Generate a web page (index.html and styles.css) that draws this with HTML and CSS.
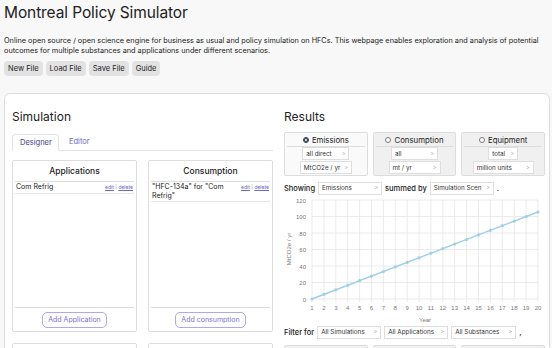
FILE: index.html
```html
<!DOCTYPE html>
<html>
<head>
<meta charset="utf-8">
<link rel="stylesheet" href="styles.css">
</head>
<body>
<header class="top">
  <h1 class="title">Montreal Policy Simulator</h1>
  <p class="intro">Online open source / open science engine for business as usual and policy simulation on HFCs. This webpage enables exploration and analysis of potential outcomes for multiple substances and applications under different scenarios.</p>
  <div class="file-buttons">
    <button class="file-btn">New File</button>
    <button class="file-btn">Load File</button>
    <button class="file-btn">Save File</button>
    <button class="file-btn">Guide</button>
  </div>
</header>
<main class="panel">
  <section class="sim">
    <h2 class="section-title">Simulation</h2>
    <div class="tabs">
      <span class="tab active">Designer</span>
      <span class="tab">Editor</span>
      <span class="tab-rest"></span>
    </div>
    <div class="boxes">
      <div class="box">
        <div class="box-title">Applications</div>
        <div class="box-items">
          <div class="item"><span class="item-name">Com Refrig</span><span class="item-links"><a>edit</a> | <a>delete</a></span></div>
        </div>
        <div class="box-foot"><button class="add-btn">Add Application</button></div>
      </div>
      <div class="box">
        <div class="box-title">Consumption</div>
        <div class="box-items">
          <div class="item"><span class="item-name">"HFC-134a" for "Com Refrig"</span><span class="item-links"><a>edit</a> | <a>delete</a></span></div>
        </div>
        <div class="box-foot"><button class="add-btn">Add consumption</button></div>
      </div>
    </div>
    <div class="boxes next">
      <div class="box stub"></div>
      <div class="box stub"></div>
    </div>
  </section>
  <section class="results">
    <h2 class="section-title">Results</h2>
    <div class="metrics">
      <div class="metric selected">
        <div class="metric-head"><span class="radio on"></span>Emissions</div>
        <div class="sel w47">all direct<span class="chev">&gt;</span></div>
        <div class="sel w52">MtCO2e / yr<span class="chev">&gt;</span></div>
      </div>
      <div class="metric">
        <div class="metric-head"><span class="radio"></span>Consumption</div>
        <div class="sel w47">all<span class="chev">&gt;</span></div>
        <div class="sel w52">mt / yr<span class="chev">&gt;</span></div>
      </div>
      <div class="metric">
        <div class="metric-head"><span class="radio"></span>Equipment</div>
        <div class="sel w28">total<span class="chev">&gt;</span></div>
        <div class="sel w61">million units<span class="chev">&gt;</span></div>
      </div>
    </div>
    <div class="sentence">
      <span class="word">Showing</span>
      <div class="sel w64">Emissions<span class="chev">&gt;</span></div>
      <span class="word">summed by</span>
      <div class="sel w64">Simulation Scen<span class="chev">&gt;</span></div>
      <span class="word">.</span>
    </div>
    <svg class="chart" width="262" height="128" viewBox="0 0 262 128">
      <g stroke="#e6e6e6" stroke-width="0.8">
        <line x1="28" y1="4" x2="254" y2="4"/>
        <line x1="28" y1="20.5" x2="254" y2="20.5"/>
        <line x1="28" y1="37" x2="254" y2="37"/>
        <line x1="28" y1="53.5" x2="254" y2="53.5"/>
        <line x1="28" y1="70" x2="254" y2="70"/>
        <line x1="28" y1="86.5" x2="254" y2="86.5"/>
        <line x1="28" y1="103" x2="254" y2="103"/>
        <line x1="28" y1="4" x2="28" y2="106"/>
        <line x1="39.9" y1="4" x2="39.9" y2="106"/>
        <line x1="51.8" y1="4" x2="51.8" y2="106"/>
        <line x1="63.7" y1="4" x2="63.7" y2="106"/>
        <line x1="75.6" y1="4" x2="75.6" y2="106"/>
        <line x1="87.5" y1="4" x2="87.5" y2="106"/>
        <line x1="99.4" y1="4" x2="99.4" y2="106"/>
        <line x1="111.3" y1="4" x2="111.3" y2="106"/>
        <line x1="123.2" y1="4" x2="123.2" y2="106"/>
        <line x1="135.1" y1="4" x2="135.1" y2="106"/>
        <line x1="146.9" y1="4" x2="146.9" y2="106"/>
        <line x1="158.8" y1="4" x2="158.8" y2="106"/>
        <line x1="170.7" y1="4" x2="170.7" y2="106"/>
        <line x1="182.6" y1="4" x2="182.6" y2="106"/>
        <line x1="194.5" y1="4" x2="194.5" y2="106"/>
        <line x1="206.4" y1="4" x2="206.4" y2="106"/>
        <line x1="218.3" y1="4" x2="218.3" y2="106"/>
        <line x1="230.2" y1="4" x2="230.2" y2="106"/>
        <line x1="242.1" y1="4" x2="242.1" y2="106"/>
        <line x1="254" y1="4" x2="254" y2="106"/>
      </g>
      <g class="axis-text" text-anchor="end">
        <text x="22" y="6.5">120</text>
        <text x="22" y="23">100</text>
        <text x="22" y="39.5">80</text>
        <text x="22" y="56">60</text>
        <text x="22" y="72.5">40</text>
        <text x="22" y="89">20</text>
        <text x="22" y="105.5">0</text>
      </g>
      <g class="axis-text" text-anchor="middle">
        <text x="28" y="114">1</text>
        <text x="39.9" y="114">2</text>
        <text x="51.8" y="114">3</text>
        <text x="63.7" y="114">4</text>
        <text x="75.6" y="114">5</text>
        <text x="87.5" y="114">6</text>
        <text x="99.4" y="114">7</text>
        <text x="111.3" y="114">8</text>
        <text x="123.2" y="114">9</text>
        <text x="135.1" y="114">10</text>
        <text x="146.9" y="114">11</text>
        <text x="158.8" y="114">12</text>
        <text x="170.7" y="114">13</text>
        <text x="182.6" y="114">14</text>
        <text x="194.5" y="114">15</text>
        <text x="206.4" y="114">16</text>
        <text x="218.3" y="114">17</text>
        <text x="230.2" y="114">18</text>
        <text x="242.1" y="114">19</text>
        <text x="254" y="114">20</text>
        <text x="141" y="125.5">Year</text>
        <text x="0" y="0" transform="translate(6.5 53) rotate(-90)">MtCO2e / yr</text>
      </g>
      <polyline fill="none" stroke="#9fd0e8" stroke-width="1.4" points="28,103 254,16"/>
      <g fill="#9fd0e8">
        <circle cx="28" cy="103" r="1.6"/>
        <circle cx="39.9" cy="98.4" r="1.6"/>
        <circle cx="51.8" cy="93.8" r="1.6"/>
        <circle cx="63.7" cy="89.3" r="1.6"/>
        <circle cx="75.6" cy="84.7" r="1.6"/>
        <circle cx="87.5" cy="80.1" r="1.6"/>
        <circle cx="99.4" cy="75.5" r="1.6"/>
        <circle cx="111.3" cy="70.9" r="1.6"/>
        <circle cx="123.2" cy="66.4" r="1.6"/>
        <circle cx="135.1" cy="61.8" r="1.6"/>
        <circle cx="146.9" cy="57.2" r="1.6"/>
        <circle cx="158.8" cy="52.6" r="1.6"/>
        <circle cx="170.7" cy="48" r="1.6"/>
        <circle cx="182.6" cy="43.5" r="1.6"/>
        <circle cx="194.5" cy="38.9" r="1.6"/>
        <circle cx="206.4" cy="34.3" r="1.6"/>
        <circle cx="218.3" cy="29.7" r="1.6"/>
        <circle cx="230.2" cy="25.1" r="1.6"/>
        <circle cx="242.1" cy="20.6" r="1.6"/>
        <circle cx="254" cy="16" r="1.6"/>
      </g>
    </svg>
    <div class="sentence filter">
      <span class="word">Filter for</span>
      <div class="sel w64">All Simulations<span class="chev">&gt;</span></div>
      <div class="sel w64">All Applications<span class="chev">&gt;</span></div>
      <div class="sel w65">All Substances<span class="chev">&gt;</span></div>
      <span class="word">,</span>
    </div>
    <div class="metrics next">
      <div class="metric stub"></div>
      <div class="metric stub"></div>
      <div class="metric stub"></div>
    </div>
  </section>
</main>
</body>
</html>
```

FILE: styles.css
```css
* { box-sizing: border-box; }
html, body { margin: 0; padding: 0; }
body {
  background: #f8f8f8;
  font-family: Inter, "Liberation Sans", sans-serif;
  color: #222;
  width: 552px;
  height: 348px;
  overflow: hidden;
}
.top { padding: 0 4px; }
.title {
  margin: 3px 0 0;
  font-size: 15.5px;
  line-height: 20px;
  font-weight: 400;
  letter-spacing: -0.1px;
}
.intro {
  margin: 13px 0 0;
  font-size: 7.3px;
  line-height: 9.5px;
  width: 540px;
}
.file-buttons { display: flex; gap: 3px; margin-top: 6px; }
.file-btn {
  font-family: inherit;
  font-size: 7.5px;
  height: 15px;
  padding: 0 4px;
  border: none;
  border-radius: 4px;
  background: #e2e2e2;
  color: #222;
}
.panel {
  margin: 17px 0 0 4px;
  width: 546px;
  height: 280px;
  background: #fff;
  border: 1px solid #ddd;
  border-radius: 6px;
  display: flex;
  gap: 11px;
  padding: 0 0 0 7px;
}
.sim { width: 261px; }
.results { width: 261px; }
.section-title {
  margin: 14px 0 0;
  font-size: 12px;
  line-height: 18px;
  font-weight: 400;
}
.tabs { display: flex; margin-top: 8px; height: 17px; }
.tab {
  font-size: 7.5px;
  line-height: 16px;
  padding: 0 10px 0 10px;
  color: #6c66c8;
  border-bottom: 1px solid #e3e3e3;
}
.tab.active {
  color: #3f3c8c;
  border: 1px solid #e3e3e3;
  border-bottom-color: #fff;
  border-radius: 4px 4px 0 0;
  padding: 0 7px;
  width: 47px;
}
.tab-rest { flex: 1; border-bottom: 1px solid #e3e3e3; }
.boxes { display: flex; gap: 11px; margin-top: 9px; }
.box {
  width: 125px;
  height: 172px;
  border: 1px solid #ddd;
  border-radius: 2px;
  display: flex;
  flex-direction: column;
  padding: 0 2px;
}
.box-title {
  text-align: center;
  font-size: 8.5px;
  font-weight: 500;
  line-height: 20px;
  border-bottom: 1px solid #ddd;
}
.box-items { flex: 1; }
.item {
  display: flex;
  justify-content: space-between;
  align-items: flex-start;
  font-size: 7px;
  line-height: 8.5px;
  padding: 1px 1px 1px 1px;
  border-bottom: 1px solid #e6e6e6;
}
.item-name { max-width: 80px; }
.item-links { font-size: 5px; line-height: 8px; color: #999; white-space: nowrap; }
.item-links a { color: #6c66c8; text-decoration: underline; }
.box-foot {
  border-top: 1px solid #ddd;
  height: 24px;
  display: flex;
  justify-content: center;
  align-items: center;
}
.add-btn {
  font-family: inherit;
  font-size: 7px;
  height: 16px;
  padding: 0 5px;
  background: #fff;
  color: #7a72d0;
  border: 1px solid #b0a8e8;
  border-radius: 5px;
}
.boxes.next { margin-top: 11px; }
.box.stub { height: 20px; }
.metrics { display: flex; gap: 5px; margin-top: 6px; }
.metric {
  width: 84px;
  height: 44px;
  border: 1px solid #ddd;
  border-radius: 2px;
  background: #f0f0f0;
  display: flex;
  flex-direction: column;
  align-items: center;
  padding: 1px 2px 0;
}
.metric.selected { background: #fafafa; }
.metric-head {
  width: 100%;
  display: flex;
  justify-content: center;
  align-items: center;
  gap: 3px;
  font-size: 7.8px;
  line-height: 12px;
  border-bottom: 1px solid #ddd;
}
.radio {
  width: 6px;
  height: 6px;
  border-radius: 50%;
  border: 0.8px solid #777;
  background: #fff;
}
.radio.on { border: 1.7px solid #1f3550; background: #fff; box-shadow: inset 0 0 0 1px #1f3550; }
.sel {
  display: flex;
  align-items: center;
  justify-content: space-between;
  height: 13px;
  padding: 0 3px 0 3px;
  background: #fff;
  border: 1px solid #dedede;
  font-size: 6.3px;
  font-stretch: condensed;
  color: #333;
  white-space: nowrap;
  overflow: hidden;
}
.metric .sel + .sel { margin-top: 1px; }
.chev { color: #aaa; font-size: 5.5px; margin-left: 4px; }
.w28 { width: 30px; }
.w47 { width: 47px; }
.w52 { width: 52px; }
.w61 { width: 61px; }
.w64 { width: 64px; }
.w65 { width: 65px; }
.sentence {
  display: flex;
  align-items: center;
  gap: 3px;
  margin-top: 5px;
  height: 14px;
}
.word { font-size: 7.5px; font-weight: 500; }
.chart { display: block; margin-top: 1px; }
.axis-text { font-size: 6px; fill: #777; font-family: "Liberation Sans", sans-serif; }
.filter { margin-top: 1px; }
.metrics.next { margin-top: 6px; }
.metric.stub { height: 20px; }
```
